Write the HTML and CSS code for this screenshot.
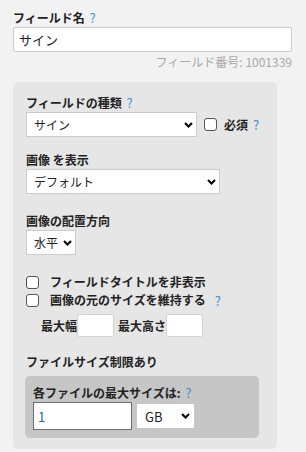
FILE: index.html
```html
<!DOCTYPE html>
<html lang="ja">
<head>
<meta charset="utf-8">
<link rel="stylesheet" href="styles.css">
</head>
<body>
<div class="page">
  <div class="label">フィールド名 <span class="help">?</span></div>
  <input class="text-input name-input" type="text" value="サイン">
  <div class="field-no">フィールド番号: 1001339</div>

  <div class="panel">
    <div class="label">フィールドの種類 <span class="help">?</span></div>
    <div class="row type-row">
      <div class="select-wrap w-type">
        <select class="select"><option>サイン</option></select>
        <svg class="chev" width="9" height="6" viewBox="0 0 9 6"><path d="M1 1 L4.5 4.5 L8 1" fill="none" stroke="#000" stroke-width="2"/></svg>
      </div>
      <input type="checkbox" class="check">
      <span class="bold-text">必須</span>
      <span class="help">?</span>
    </div>

    <div class="label gap-label">画像 を表示</div>
    <div class="select-wrap w-display">
      <select class="select"><option>デフォルト</option></select>
      <svg class="chev" width="9" height="6" viewBox="0 0 9 6"><path d="M1 1 L4.5 4.5 L8 1" fill="none" stroke="#000" stroke-width="2"/></svg>
    </div>

    <div class="label gap-label2">画像の配置方向</div>
    <div class="select-wrap w-dir">
      <select class="select"><option>水平</option></select>
      <svg class="chev" width="9" height="6" viewBox="0 0 9 6"><path d="M1 1 L4.5 4.5 L8 1" fill="none" stroke="#000" stroke-width="2"/></svg>
    </div>

    <div class="checks">
      <label class="check-row"><input type="checkbox" class="check"><span class="bold-text">フィールドタイトルを非表示</span></label>
      <label class="check-row"><input type="checkbox" class="check"><span class="bold-text">画像の元のサイズを維持する</span><span class="help">?</span></label>
    </div>

    <div class="size-row">
      <span class="bold-text">最大幅</span><input type="text" class="small-input">
      <span class="bold-text sp">最大高さ</span><input type="text" class="small-input">
    </div>

    <div class="label gap-label3">ファイルサイズ制限あり</div>
    <div class="inner">
      <div class="label">各ファイルの最大サイズは: <span class="help">?</span></div>
      <div class="row">
        <input type="text" class="size-input" value="1">
        <div class="select-wrap w-unit">
          <select class="select unit"><option>GB</option></select>
          <svg class="chev" width="9" height="6" viewBox="0 0 9 6"><path d="M1 1 L4.5 4.5 L8 1" fill="none" stroke="#000" stroke-width="2"/></svg>
        </div>
      </div>
    </div>
  </div>
</div>
</body>
</html>
```

FILE: styles.css
```css
* { box-sizing: border-box; }
html, body { margin: 0; padding: 0; }
body {
  background: #f2f2f2;
  font-family: "Noto Sans CJK JP", "Noto Sans", sans-serif;
  font-size: 12px;
  color: #222;
}
.page { padding: 10px 14px 0 13px; }
.label {
  font-weight: bold;
  line-height: 16px;
  margin-bottom: 1px;
  color: #222;
}
.help { color: #3a8ed0; font-weight: normal; font-size: 13px; margin-left: 2px; }
.bold-text { font-weight: bold; line-height: 16px; }
.text-input {
  display: block;
  width: 279px;
  height: 25px;
  border: 1px solid #cccccc;
  border-radius: 2px;
  background: #fff;
  font-family: inherit;
  font-size: 13px;
  padding: 0 5px;
  color: #222;
  margin: 0;
}
.field-no {
  text-align: right;
  color: #a8a8a8;
  line-height: 16px;
  margin-top: 2px;
}
.panel {
  margin-top: 12px;
  width: 264px;
  background: #e6e6e6;
  border-radius: 5px;
  padding: 13px 12px 11px 13px;
}
.row { display: flex; align-items: center; }
.select-wrap { position: relative; height: 25px; }
.select {
  appearance: none;
  -webkit-appearance: none;
  width: 100%;
  height: 100%;
  border: 1px solid #cccccc;
  border-radius: 0;
  background: #fff;
  font-family: inherit;
  font-size: 12px;
  color: #222;
  padding: 0 0 0 7px;
  margin: 0;
}
.chev { position: absolute; right: 4px; top: 50%; margin-top: -3px; pointer-events: none; }
.w-type { width: 171px; }
.w-display { width: 194px; }
.w-dir { width: 50px; }
.type-row .check { margin: 0 7px 0 7px; }
.type-row .help { margin-left: 5px; }
.check {
  appearance: none;
  -webkit-appearance: none;
  width: 13px;
  height: 13px;
  border: 1px solid #555;
  border-radius: 3px;
  background: #fff;
  margin: 0;
  flex: none;
}
.gap-label { margin-top: 15px; }
.gap-label2 { margin-top: 19px; }
.checks { margin-top: 18px; display: flex; flex-direction: column; }
.check-row { display: flex; align-items: center; height: 18px; }
.check-row .check { margin-right: 11px; }
.check-row .help { margin-left: 9px; }
.size-row {
  display: flex;
  align-items: center;
  margin-top: 5px;
  padding-left: 15px;
}
.small-input {
  width: 37px;
  height: 23px;
  border: 1px solid #d4d4d4;
  border-radius: 2px;
  background: #fff;
  margin: 0;
}
.size-row .sp { margin-left: 4px; }
.gap-label3 { margin-top: 17px; }
.inner {
  margin-top: 6px;
  width: 234px;
  margin-left: -1px;
  background: #c6c6c6;
  border-radius: 5px;
  padding: 9px 8px 8px 8px;
}
.size-input {
  width: 99px;
  height: 28px;
  border: 1px solid #6e6e6e;
  border-radius: 0;
  background: #fff;
  font-family: inherit;
  font-size: 13px;
  padding: 0 4px;
  color: #1f5fa8;
  margin: 0;
}
.w-unit { width: 57px; height: 24px; margin-left: 5px; }
.unit { border: none; padding-left: 8px; font-size: 13px; }
```
